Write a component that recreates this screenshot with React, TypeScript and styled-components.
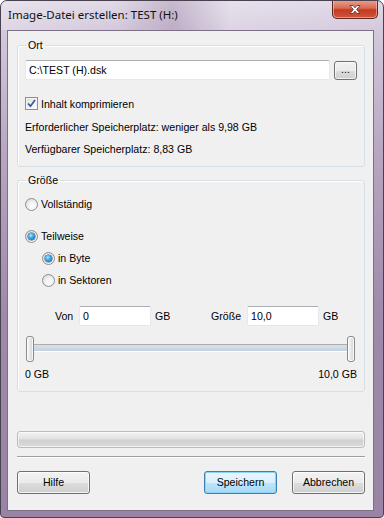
import React from "react";
import styled, { createGlobalStyle } from "styled-components";

const GlobalStyle = createGlobalStyle`
  html, body {
    margin: 0;
    padding: 0;
    background: #ffffff;
  }
  * {
    box-sizing: border-box;
  }
`;

const Window = styled.div`
  width: 384px;
  height: 518px;
  display: flex;
  flex-direction: column;
  border: 1px solid #4a4150;
  border-radius: 7px 7px 4px 4px;
  background: linear-gradient(180deg, #e0d9e6 0%, #d3c8dc 6%, #b7a5c1 30%, #a08aab 60%, #9a84a6 100%);
  font-family: "Liberation Sans", Arial, sans-serif;
  font-size: 10.6px;
  color: #000;
  overflow: hidden;
`;

const TitleBar = styled.div`
  height: 29px;
  display: flex;
  align-items: flex-start;
  padding-left: 7px;
  background: linear-gradient(90deg, rgba(255,255,255,0.25) 0%, rgba(255,255,255,0) 30%, rgba(120,90,130,0.25) 45%, rgba(255,255,255,0.2) 60%, rgba(255,255,255,0) 100%);
`;

const Title = styled.div`
  flex: 1;
  padding-top: 6px;
  font-family: "Noto Sans", "Open Sans", sans-serif;
  font-size: 11.5px;
  line-height: 15px;
  color: #111;
`;

const CloseButton = styled.div`
  width: 46px;
  height: 19px;
  margin-right: 5px;
  margin-top: -1px;
  border: 1px solid #5a2a22;
  border-top: none;
  border-radius: 0 0 5px 5px;
  background: linear-gradient(180deg, #eba290 0%, #d96a52 45%, #c23a22 55%, #d2553a 100%);
  box-shadow: inset 0 0 0 1px rgba(255, 220, 210, 0.5);
  display: flex;
  align-items: center;
  justify-content: center;
`;

const Client = styled.div`
  flex: 1;
  margin: 0 9px 6px 6px;
  background: #f0f0f0;
  border: 1px solid #7d6f86;
  padding: 8px 8px 0 9px;
  display: flex;
  flex-direction: column;
`;

const Group = styled.fieldset<{ $top?: number }>`
  margin: ${(p) => p.$top || 0}px 0 0 0;
  padding: 0 7px 0 7px;
  border: 1px solid #d5dfe5;
  border-radius: 3px;
  display: flex;
  flex-direction: column;
  min-width: 0;
  box-shadow: inset 1px 1px 0 #ffffff;
`;

const Legend = styled.legend`
  margin-left: 1px;
  padding: 0 2px;
  line-height: 13px;
  font-size: 10.6px;
`;

const PathRow = styled.div`
  display: flex;
  align-items: center;
  gap: 4px;
  height: 20px;
  margin-top: 8px;
`;

const TextInput = styled.div<{ $width?: number }>`
  height: 20px;
  ${(p) => (p.$width ? `width: ${p.$width}px;` : "flex: 1;")}
  background: #fff;
  border: 1px solid #e3e9ef;
  border-top-color: #abadb3;
  border-radius: 2px;
  padding: 0 3px;
  line-height: 18px;
  white-space: nowrap;
`;

const SmallButton = styled.div`
  width: 23px;
  height: 19px;
  border: 1px solid #707070;
  border-radius: 3px;
  background: linear-gradient(180deg, #f2f2f2 0%, #ebebeb 50%, #dddddd 51%, #cfcfcf 100%);
  box-shadow: inset 0 0 0 1px rgba(255, 255, 255, 0.7);
  text-align: center;
  line-height: 15px;
`;

const CheckRow = styled.div<{ $top: number }>`
  display: flex;
  align-items: center;
  gap: 3px;
  height: 13px;
  margin-top: ${(p) => p.$top}px;
`;

const Box = styled.div`
  width: 13px;
  height: 13px;
  border: 1px solid #8e8f8f;
  background: linear-gradient(135deg, #dcdcdc 0%, #f4f4f4 60%, #ffffff 100%);
  box-shadow: inset 0 0 0 1px #f4f4f4;
  display: flex;
  align-items: center;
  justify-content: center;
`;

const InfoText = styled.div<{ $top: number; $bottom?: number }>`
  height: 13px;
  line-height: 13px;
  margin-top: ${(p) => p.$top}px;
  margin-bottom: ${(p) => p.$bottom || 0}px;
`;

const RadioRow = styled.div<{ $top: number; $indent?: number }>`
  display: flex;
  align-items: center;
  gap: 3px;
  height: 13px;
  line-height: 13px;
  margin-top: ${(p) => p.$top}px;
  margin-left: ${(p) => p.$indent || 0}px;
`;

const RadioCircle = styled.div<{ $checked?: boolean }>`
  width: 13px;
  height: 13px;
  border-radius: 50%;
  border: 1px solid #8e8f8f;
  background: radial-gradient(circle at 60% 65%, #ffffff 0%, #f0f0f0 45%, #cfcfcf 100%);
  display: flex;
  align-items: center;
  justify-content: center;
  &::after {
    content: "";
    display: ${(p) => (p.$checked ? "block" : "none")};
    width: 7px;
    height: 7px;
    border-radius: 50%;
    background: radial-gradient(circle at 40% 35%, #b8e6ff 0%, #3ea6e4 40%, #0a5aa6 100%);
    box-shadow: 0 0 0 0.5px #1c4f86;
  }
`;

const RangeRow = styled.div`
  display: flex;
  align-items: center;
  height: 20px;
  margin-top: 19px;
  margin-left: 30px;
`;

const FieldLabel = styled.div<{ $width: number }>`
  width: ${(p) => p.$width}px;
`;

const Unit = styled.div<{ $width?: number }>`
  padding-left: 4px;
  ${(p) => (p.$width ? `width: ${p.$width}px;` : "")}
`;

const SliderRow = styled.div`
  display: flex;
  align-items: center;
  height: 26px;
  margin-top: 10px;
  margin-left: 1px;
  margin-right: 2px;
`;

const Thumb = styled.div`
  width: 8px;
  height: 26px;
  border: 1px solid #8a8a8a;
  border-radius: 3px;
  background: linear-gradient(90deg, #fafafa 0%, #e6e6e6 50%, #d4d4d4 100%);
  box-shadow: inset 0 0 0 1px rgba(255, 255, 255, 0.8);
`;

const Track = styled.div`
  flex: 1;
  height: 8px;
  margin-top: -2px;
  border-top: 1px solid #acacac;
  border-bottom: 1px solid #ffffff;
  background: linear-gradient(180deg, #d8e1e9 0%, #c3d2df 100%);
`;

const ScaleRow = styled.div`
  display: flex;
  justify-content: space-between;
  height: 13px;
  line-height: 13px;
  margin-top: 6px;
  margin-bottom: 10px;
`;

const Progress = styled.div`
  height: 17px;
  margin-top: 39px;
  border: 1px solid #bcbcbc;
  border-radius: 3px;
  background: linear-gradient(180deg, #f3f3f3 0%, #e2e2e2 45%, #d0d0d0 55%, #dcdcdc 100%);
  box-shadow: inset 0 0 0 1px rgba(255, 255, 255, 0.6);
`;

const Separator = styled.div`
  height: 2px;
  margin-top: 8px;
  border-top: 1px solid #a0a0a0;
  border-bottom: 1px solid #ffffff;
`;

const ButtonBar = styled.div`
  display: flex;
  gap: 15px;
  margin-top: 13px;
`;

const DialogButton = styled.div<{ $default?: boolean }>`
  width: 73px;
  height: 23px;
  border: 1px solid ${(p) => (p.$default ? "#3c7fb1" : "#707070")};
  border-radius: 3px;
  background: ${(p) =>
    p.$default
      ? "linear-gradient(180deg, #eaf6fd 0%, #d9f0fc 50%, #bee6fd 51%, #a7d9f5 100%)"
      : "linear-gradient(180deg, #f2f2f2 0%, #ebebeb 50%, #dddddd 51%, #cfcfcf 100%)"};
  box-shadow: inset 0 0 0 1px ${(p) => (p.$default ? "#8fd3f6" : "rgba(255, 255, 255, 0.75)")};
  display: flex;
  align-items: center;
  justify-content: center;
  line-height: 13px;
`;

const Spacer = styled.div`
  flex: 1;
`;

const CloseGlyph = () => (
  <svg width="14" height="11" viewBox="0 0 14 11">
    <path
      d="M2 1.5 L5 1.5 L7 3.8 L9 1.5 L12 1.5 L8.7 5.5 L12 9.5 L9 9.5 L7 7.2 L5 9.5 L2 9.5 L5.3 5.5 Z"
      fill="#ffffff"
      stroke="#5b3a36"
      strokeWidth="0.9"
      strokeLinejoin="round"
    />
  </svg>
);

const CheckMark = () => (
  <svg width="9" height="9" viewBox="0 0 9 9">
    <path d="M1 4.5 L3.5 7.2 L8 1" fill="none" stroke="#3b5aa0" strokeWidth="1.8" />
  </svg>
);

const App = () => {
  return (
    <>
      <GlobalStyle />
      <Window>
        <TitleBar>
          <Title>Image-Datei erstellen: TEST (H:)</Title>
          <CloseButton>
            <CloseGlyph />
          </CloseButton>
        </TitleBar>
        <Client>
          <Group>
            <Legend>Ort</Legend>
            <PathRow>
              <TextInput>C:\TEST (H).dsk</TextInput>
              <SmallButton>...</SmallButton>
            </PathRow>
            <CheckRow $top={17}>
              <Box>
                <CheckMark />
              </Box>
              <span>Inhalt komprimieren</span>
            </CheckRow>
            <InfoText $top={11}>Erforderlicher Speicherplatz: weniger als 9,98 GB</InfoText>
            <InfoText $top={9} $bottom={10}>
              Verfügbarer Speicherplatz: 8,83 GB
            </InfoText>
          </Group>

          <Group $top={7}>
            <Legend>Größe</Legend>
            <RadioRow $top={11}>
              <RadioCircle />
              <span>Vollständig</span>
            </RadioRow>
            <RadioRow $top={19}>
              <RadioCircle $checked />
              <span>Teilweise</span>
            </RadioRow>
            <RadioRow $top={9} $indent={17}>
              <RadioCircle $checked />
              <span>in Byte</span>
            </RadioRow>
            <RadioRow $top={9} $indent={17}>
              <RadioCircle />
              <span>in Sektoren</span>
            </RadioRow>
            <RangeRow>
              <FieldLabel $width={24}>Von</FieldLabel>
              <TextInput $width={72}>0</TextInput>
              <Unit $width={60}>GB</Unit>
              <FieldLabel $width={36}>Größe</FieldLabel>
              <TextInput $width={72}>10,0</TextInput>
              <Unit>GB</Unit>
            </RangeRow>
            <SliderRow>
              <Thumb />
              <Track />
              <Thumb />
            </SliderRow>
            <ScaleRow>
              <span>0 GB</span>
              <span>10,0 GB</span>
            </ScaleRow>
          </Group>

          <Progress />
          <Separator />
          <ButtonBar>
            <DialogButton>Hilfe</DialogButton>
            <Spacer />
            <DialogButton $default>Speichern</DialogButton>
            <DialogButton>Abbrechen</DialogButton>
          </ButtonBar>
        </Client>
      </Window>
    </>
  );
};

export default App;
